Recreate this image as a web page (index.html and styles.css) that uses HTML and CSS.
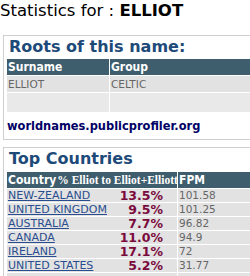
FILE: index.html
```html
<!DOCTYPE html>
<html lang="en">
<head>
  <meta charset="UTF-8">
  <title>Statistics for ELLIOT</title>
  <link rel="stylesheet" href="styles.css">
</head>
<body>

  <div class="stat-title">Statistics for : <b>ELLIOT</b></div>

  <div class="box">
    <h2>Roots of this name:</h2>
    <table class="grid roots">
      <tr>
        <th class="col-surname">Surname</th>
        <th>Group</th>
      </tr>
      <tr>
        <td>ELLIOT</td>
        <td>CELTIC</td>
      </tr>
      <tr class="empty">
        <td></td>
        <td></td>
      </tr>
    </table>
    <div class="site">worldnames.publicprofiler.org</div>
  </div>

  <div class="box">
    <h2>Top Countries</h2>
    <table class="grid countries">
      <tr>
        <th class="col-country">Country<span class="pct-head">% Elliot to Elliot+Elliott</span></th>
        <th>FPM</th>
      </tr>
      <tr>
        <td class="col-country"><div class="cell"><a href="#">NEW-ZEALAND</a><span class="pct">13.5%</span></div></td>
        <td>101.58</td>
      </tr>
      <tr>
        <td class="col-country"><div class="cell"><a href="#">UNITED KINGDOM</a><span class="pct">9.5%</span></div></td>
        <td>101.25</td>
      </tr>
      <tr>
        <td class="col-country"><div class="cell"><a href="#">AUSTRALIA</a><span class="pct">7.7%</span></div></td>
        <td>96.82</td>
      </tr>
      <tr>
        <td class="col-country"><div class="cell"><a href="#">CANADA</a><span class="pct">11.0%</span></div></td>
        <td>94.9</td>
      </tr>
      <tr>
        <td class="col-country"><div class="cell"><a href="#">IRELAND</a><span class="pct">17.1%</span></div></td>
        <td>72</td>
      </tr>
      <tr>
        <td class="col-country"><div class="cell"><a href="#">UNITED STATES</a><span class="pct">5.2%</span></div></td>
        <td>31.77</td>
      </tr>
      <tr>
        <td class="col-country"></td>
        <td></td>
      </tr>
    </table>
  </div>

</body>
</html>
```

FILE: styles.css
```css
body {
  margin: 0;
  font-family: "DejaVu Sans", sans-serif;
  background: #fff;
  overflow: hidden;
}

.stat-title {
  font-size: 16.5px;
  line-height: 22px;
  color: #000;
  height: 35px;
}

.box {
  margin-left: 3px;
  width: 320px;
  border: 1px solid #cfcfcf;
  padding: 0 3px;
}

.box + .box {
  margin-top: 7px;
}

h2 {
  margin: 0 0 1px 2px;
  font-size: 16px;
  line-height: 21px;
  color: #1d4a78;
}

.box + .box h2 {
  margin-bottom: 2px;
}

.grid {
  border-collapse: separate;
  border-spacing: 1px;
  margin-left: -1px;
  width: 100%;
  table-layout: fixed;
}

.grid th {
  background: #3e5d6d;
  color: #fff;
  font-family: "DejaVu Sans Condensed", "DejaVu Sans", sans-serif;
  font-stretch: condensed;
  font-size: 12px;
  text-align: left;
  height: 16px;
  padding: 0 1px;
  white-space: nowrap;
  overflow: hidden;
}

.grid td {
  background: #e2e2e2;
  color: #666;
  font-size: 10.5px;
  height: 16px;
  padding: 0 1px;
  white-space: nowrap;
}

.roots .col-surname {
  width: 100px;
}

.roots .empty td {
  background: #e9e9e9;
  height: 19px;
}

.site {
  font-family: "DejaVu Sans Condensed", "DejaVu Sans", sans-serif;
  font-stretch: condensed;
  font-size: 12.7px;
  font-weight: bold;
  color: #000066;
  line-height: 18px;
  padding: 4px 0;
}

.countries .col-country {
  width: 168px;
}

.countries td {
  height: 13px;
  line-height: 13px;
}

.pct-head {
  font-family: "Liberation Serif", serif;
  font-stretch: normal;
  font-size: 11.5px;
  margin-left: 1px;
}

.cell {
  display: flex;
  justify-content: space-between;
  padding-right: 13px;
}

.countries a {
  color: #2a4d8f;
  font-size: 11px;
}

.pct {
  color: #7a0a3c;
  font-weight: bold;
  font-size: 12.5px;
}
```
